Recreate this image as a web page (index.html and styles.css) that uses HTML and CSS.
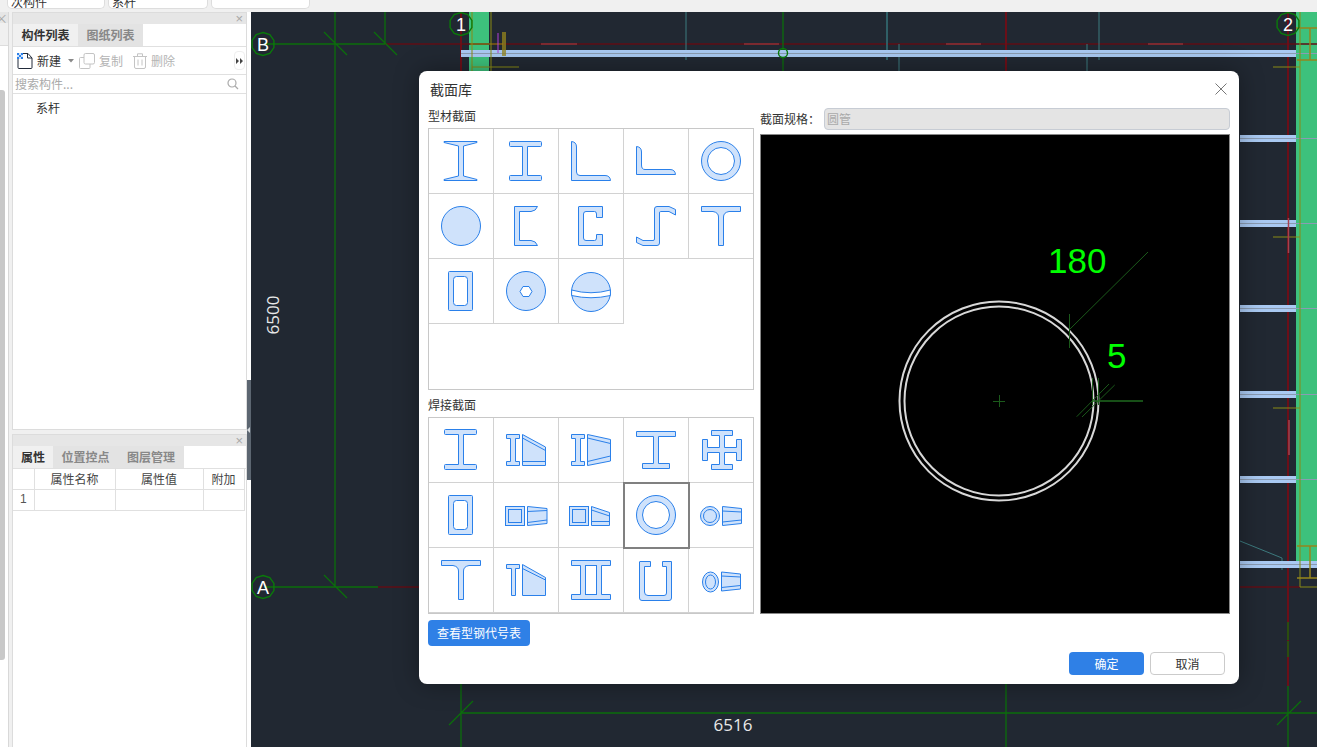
FILE: index.html
```html
<!DOCTYPE html>
<html lang="zh">
<head>
<meta charset="utf-8">
<title>截面库</title>
<link rel="stylesheet" href="styles.css">
</head>
<body>
<div class="topbar">
  <div class="top-field f1">次构件</div>
  <div class="top-field f2">系杆</div>
  <div class="top-field f3"></div>
</div>
<div class="main">
  <div class="strip">
    <div class="strip-head">×</div>
    <div class="strip-tabs"></div>
    <div class="strip-body"><div class="strip-scroll"></div></div>
  </div>
  <div class="panels">
    <section class="panel panel-list">
      <div class="panel-head"><span class="panel-x">×</span></div>
      <div class="tabs">
        <div class="tab active w65">构件列表</div>
        <div class="tab w65">图纸列表</div>
      </div>
      <div class="toolbar">
        <svg class="tool-icon" width="16" height="16" viewBox="0 0 16 16"><path class="doc" d="M1 4V14.500Q1 15.500 2 15.500H14Q15 15.500 15 14.500V5L11 .5H6"/><path class="doc" d="M10.500 .5V5H15"/><rect class="chk" x="0" y="0" width="6" height="6"/><path class="chk2" d="M0 0h2v2H0zM4 0h2v2H4zM2 2h2v2H2zM0 4h2v2H0zM4 4h2v2H4z"/></svg>
        <span class="tool-text">新建</span>
        <svg class="caret" width="6" height="4" viewBox="0 0 6 4"><path d="M0 0H6L3 3.500Z"/></svg>
        <svg class="tool-icon off" width="16" height="16" viewBox="0 0 16 16"><rect class="dis" x="5" y=".5" width="10.500" height="10.500" rx="1.500"/><path class="dis" d="M5 4.500H1.500Q.5 4.500 .5 5.500V14.500Q.5 15.500 1.500 15.500H10Q11 15.500 11 14.500V11"/></svg>
        <span class="tool-text muted">复制</span>
        <svg class="tool-icon off2" width="14" height="16" viewBox="0 0 14 16"><path class="dis" d="M0 3.500H14M4.500 3.500V.8H9.500V3.500M1.500 3.500V14Q1.500 15.500 3 15.500H11Q12.500 15.500 12.500 14V3.500M5 6.500V12.500M9 6.500V12.500"/></svg>
        <span class="tool-text muted">删除</span>
        <div class="more"><svg width="7" height="6" viewBox="0 0 7 6"><path d="M0 0L3 3L0 6ZM4 0L7 3L4 6Z"/></svg></div>
      </div>
      <div class="search">
        <span>搜索构件...</span>
        <svg width="12" height="12" viewBox="0 0 12 12"><circle class="mag" cx="5" cy="5" r="4"/><path class="mag" d="M8 8L11 11"/></svg>
      </div>
      <div class="list-item">系杆</div>
    </section>
    <section class="panel panel-props">
      <div class="panel-head"><span class="panel-x">×</span></div>
      <div class="tabs tabs-props">
        <div class="tab active w40">属性</div>
        <div class="tab w65">位置控点</div>
        <div class="tab w66">图层管理</div>
      </div>
      <table class="props">
        <colgroup><col class="c0"><col class="c1"><col class="c2"><col class="c3"></colgroup>
        <tr><th></th><th>属性名称</th><th>属性值</th><th>附加</th></tr>
        <tr><td class="num">1</td><td></td><td></td><td></td></tr>
      </table>
    </section>
  </div>
  <div class="splitter"><div class="handle"><svg width="3" height="6" viewBox="0 0 3 6"><path d="M3 0V6L0 3Z"/></svg></div></div>
  <div class="canvas">
    <svg class="cad" viewBox="251 12 1066 735" width="1066" height="735">
      <defs>
        <polygon id="bub" class="bubble" points="0,-11.500 6.800,-9.300 10.900,-3.600 10.900,3.600 6.800,9.300 0,11.500 -6.800,9.300 -10.900,3.600 -10.900,-3.600 -6.800,-9.300"/>
      </defs>
      <rect x="469" y="12" width="20" height="60" class="col"/>
      <rect x="1296" y="12" width="21" height="550" class="col"/>
      <path class="red" d="M385 44H1317M378 587H420M1240 587H1300"/>
      <path class="red-v" d="M461 12V71M1006 12V71M1288 12V686"/>
      <path class="green" d="M264 44H385M335 12V587M385 12V44M783 12V71M324 32L347 55M374 32L397 55M264 587H378M324 575L347 598M461 684V747M461 713H1317M449 725L473 701M1006 684V747M1288 686V747M1288 622V640M1288 641V657M1277 725L1301 701"/>
      <path class="dash" d="M541 44H577M744 44H779M946 44H981M1148 44H1183"/>
      <path class="teal" d="M686 12V60M899 44V71M1087 44V71M1099 12V60M1240 541L1282 558V570"/>
      <path class="teal-b" d="M887 12V60"/>
      <g class="beam-a">
        <rect x="461" y="50" width="835" height="7"/>
        <rect x="1240" y="135" width="56" height="7"/>
        <rect x="1240" y="220" width="56" height="7"/>
        <rect x="1240" y="305" width="56" height="7"/>
        <rect x="1240" y="391" width="56" height="7"/>
        <rect x="1240" y="476" width="56" height="7"/>
        <rect x="1240" y="561" width="77" height="7"/>
      </g>
      <path class="beam-b" d="M461 53.500H1317M1240 138.500H1317M1240 223.500H1317M1240 308.500H1317M1240 394.500H1317M1240 479.500H1317M1240 564.500H1317"/>
      <path class="olive" d="M472 12V71M491 12V71M470 44H503M472 67H519M1300 12V587H1317M1273 67H1300M1273 237H1300M1273 408H1300"/>
      <path class="olive-b" d="M503 32V56M505 32V56M1296 28H1317M1297 60H1317M1310 28V60M1297 546H1317M1297 578H1317M1310 546V578"/>
      <path class="purple" d="M498 33V53"/>
      <path class="pink" d="M1288.500 218V253M1289 420V455"/>
      <circle class="bubble" cx="783" cy="53" r="4.500"/>
      <use href="#bub" x="263" y="44"/>
      <use href="#bub" x="263" y="587"/>
      <use href="#bub" x="461" y="24"/>
      <use href="#bub" x="1288" y="24"/>
      <text class="label" x="263" y="50.500">B</text>
      <text class="label" x="263" y="593.500">A</text>
      <text class="label" x="461" y="30.500">1</text>
      <text class="label" x="1288" y="30.500">2</text>
      <text class="dim" x="733" y="731">6516</text>
      <text class="dim" transform="translate(279 315) rotate(-90)">6500</text>
    </svg>
  </div>
</div>

<div class="dialog">
  <div class="dialog-head">
    <span class="dialog-title">截面库</span>
    <svg class="dialog-x" width="12" height="12" viewBox="0 0 12 12"><path d="M.5 .5L11.500 11.500M11.500 .5L.5 11.500"/></svg>
  </div>
  <div class="dialog-body">
    <div class="col-left">
      <div class="group-label first">型材截面</div>
      <div class="sec-grid tall">
        <div class="cell"><svg class="sec" viewBox="0 0 40 40"><path d="M3 .5H36V1.500L22.500 5V35L36 38.500V39.500H3V38.500L17.500 35V5L3 1.500Z"/></svg></div>
        <div class="cell"><svg class="sec" viewBox="0 0 40 40"><path d="M4.500 .5H34.500Q35.500 .5 35.500 1.500V4.500Q35.500 5.500 34.500 5.500H21.500V34.500H34.500Q35.500 34.500 35.500 35.500V38.500Q35.500 39.500 34.500 39.500H4.500Q3.500 39.500 3.500 38.500V35.500Q3.500 34.500 4.500 34.500H16.500V5.500H4.500Q3.500 5.500 3.500 4.500V1.500Q3.500 .5 4.500 .5Z"/></svg></div>
        <div class="cell"><svg class="sec" viewBox="0 0 40 40"><path d="M.5 .5Q5.500 1 5.500 6V31Q5.500 34.500 9 34.500H34Q39 34.500 39.500 39.500H.5Z"/></svg></div>
        <div class="cell"><svg class="sec" viewBox="0 0 40 40"><path d="M.5 5.500Q5.500 6 5.500 11V24Q5.500 28.500 9 28.500H34Q39 28.500 39.500 33.500H.5Z"/></svg></div>
        <div class="cell"><svg class="sec" viewBox="0 0 40 40"><circle cx="20" cy="20" r="19.500"/><circle class="hole" cx="20" cy="20" r="13.500"/></svg></div>

        <div class="cell"><svg class="sec" viewBox="0 0 40 40"><circle cx="20" cy="20" r="19.500"/></svg></div>
        <div class="cell"><svg class="sec" viewBox="0 0 40 40"><path d="M8.500 .5H31.500Q30 5 25 5.500H13.500V34.500H25Q30 35 31.500 39.500H8.500Z"/></svg></div>
        <div class="cell"><svg class="sec" viewBox="0 0 40 40"><path d="M8 .5H31.500V11.500H25.500V8Q25.500 5.500 23.500 5.500H15Q12.500 5.500 12.500 8V32Q12.500 34.500 15 34.500H23.500Q25.500 34.500 25.500 32V28.500H31.500V39.500H8Q7.500 39.500 7.500 39V1Q7.500 .5 8 .5Z"/></svg></div>
        <div class="cell"><svg class="sec" viewBox="0 0 40 40"><path d="M18.500 3Q18.500 .5 21 .5H33L39.500 3.500V9L33 5.500H24.500Q23.500 5.500 23.500 7V37Q23.500 39.500 21 39.500H7L.5 36.500V31L7 34.500H17Q18.500 34.500 18.500 33Z"/></svg></div>
        <div class="cell"><svg class="sec" viewBox="0 0 40 40"><path d="M.5 .5H39.500V5.500H28Q22.500 6.500 22.500 11V39.500H17.500V11Q17.500 6.500 12 5.500H.5Z"/></svg></div>

        <div class="cell"><svg class="sec" viewBox="0 0 40 40"><rect x="7.500" y=".5" width="24" height="39" rx="1"/><rect class="hole" x="12.500" y="5.500" width="14" height="29" rx="3"/></svg></div>
        <div class="cell"><svg class="sec" viewBox="0 0 40 40"><circle cx="20" cy="20" r="19.500"/><path class="hole" d="M14 20.500L17 15.500H23L26 20.500L23 25.500H17Z"/></svg></div>
        <div class="cell"><svg class="sec" viewBox="0 0 40 40"><circle cx="20" cy="21" r="19.500"/><path class="hole" d="M.6 19Q20 24.500 39.400 19V24.500Q20 29 .6 24.500Z"/></svg></div>
      </div>
      <div class="group-label">焊接截面</div>
      <div class="sec-grid">
        <div class="cell"><svg class="sec" viewBox="0 0 40 40"><path d="M4.500 -.5H34.500Q35.500 -.5 35.500 .5V3.500Q35.500 4.500 34.500 4.500H22.500V34.500H34.500Q35.500 34.500 35.500 35.500V38.500Q35.500 39.500 34.500 39.500H4.500Q3.500 39.500 3.500 38.500V35.500Q3.500 34.500 4.500 34.500H17.500V4.500H4.500Q3.500 4.500 3.500 3.500V.5Q3.500 -.5 4.500 -.5Z"/></svg></div>
        <div class="cell"><svg class="sec" viewBox="0 0 40 40"><path d="M.5 4.500H13.500V8.500H9.500V31.500H13.500V35.500H.5V31.500H4.500V8.500H.5Z"/><path d="M16.500 4.500L39.500 17V35.500H16.500Z"/><path d="M16.500 8L39.500 20.500M16.500 31.500H39.500"/></svg></div>
        <div class="cell"><svg class="sec" viewBox="0 0 40 40"><path d="M.5 4.500H13.500V8.500H9.500V31.500H13.500V35.500H.5V31.500H4.500V8.500H.5Z"/><path d="M16.500 4.500L39.500 9.500V31L16.500 35.500Z"/><path class="hair" d="M16.500 8L39.500 13.500M16.500 31.500L39.500 26"/></svg></div>
        <div class="cell"><svg class="sec" viewBox="0 0 40 40"><path d="M.5 1.500H39.500V6.500H22.500V33.500H33.500V38.500H6.500V33.500H17.500V6.500H.5Z"/></svg></div>
        <div class="cell"><svg class="sec" viewBox="0 0 40 40"><path d="M10.500 .5H31.500V5.500H23.500V17.500H35.500V9.500H40.500V30.500H35.500V22.500H23.500V34.500H31.500V39.500H10.500V34.500H18.500V22.500H6.500V30.500H1.500V9.500H6.500V17.500H18.500V5.500H10.500Z"/></svg></div>

        <div class="cell"><svg class="sec" viewBox="0 0 40 40"><rect x="7.500" y=".5" width="24" height="39" rx="1"/><rect class="hole" x="12.500" y="5.500" width="14" height="29" rx="3"/></svg></div>
        <div class="cell"><svg class="sec" viewBox="0 0 40 40"><rect x="-.5" y="11.500" width="19" height="19"/><rect x="2.500" y="14.500" width="13" height="13"/><path d="M21.500 11.500L41 13.500V28.500L21.500 30.500Z"/><path class="hair" d="M21.500 16.500L41 15.500M21.500 27.500L41 25"/></svg></div>
        <div class="cell"><svg class="sec" viewBox="0 0 40 40"><rect x="-1.500" y="11.500" width="19" height="19"/><rect x="1.500" y="14.500" width="13" height="13"/><path d="M20.500 11.500L38.500 17.500V30.500H20.500Z"/><path class="hair" d="M20.500 15L38.500 21M20.500 26.500H38.500"/></svg></div>
        <div class="cell selected"><svg class="sec" viewBox="0 0 40 40"><circle cx="20" cy="20" r="19.500"/><circle class="hole" cx="20" cy="20" r="13.500"/></svg></div>
        <div class="cell"><svg class="sec" viewBox="0 0 40 40"><circle cx="9" cy="21" r="9.500"/><circle cx="9" cy="21" r="6.500"/><path d="M21.500 11.500L40.500 13.500V28.500L21.500 30.500Z"/><path class="hair" d="M21.500 16L40.500 17M21.500 27L40.500 25"/></svg></div>

        <div class="cell"><svg class="sec" viewBox="0 0 40 40"><path d="M.5 .5H39.500V5.500H28Q22.500 6.500 22.500 11V39.500H17.500V11Q17.500 6.500 12 5.500H.5Z"/></svg></div>
        <div class="cell"><svg class="sec" viewBox="0 0 40 40"><path d="M.5 4.500H13.500V8.500H9.500V35.500H5.500V8.500H.5Z"/><path d="M16.500 4.500L39.500 17.500V35.500H16.500Z"/><path d="M16.500 8.500L39.500 20"/></svg></div>
        <div class="cell"><svg class="sec" viewBox="0 0 40 40"><path d="M.5 .5H39.500V5.500H30.500V34.500H39.500V39.500H.5V34.500H9.500V5.500H.5Z"/><rect class="hole" x="14.500" y="5.500" width="11" height="29"/></svg></div>
        <div class="cell"><svg class="sec" viewBox="0 0 40 40"><path d="M4 1.500H14.500V6.500H8.500V32Q8.500 35.500 12 35.500H28Q30.500 35.500 30.500 33V6.500H26.500V1.500H35.500V38Q35.500 40.500 33 40.500H6Q3.500 40.500 3.500 38V2Q3.500 1.500 4 1.500Z"/></svg></div>
        <div class="cell"><svg class="sec" viewBox="0 0 40 40"><ellipse cx="9.500" cy="22" rx="8" ry="10"/><ellipse cx="9.500" cy="22" rx="5" ry="7"/><path d="M20.500 12L39.500 14V29L20.500 31Z"/><path class="hair" d="M20.500 16L39.500 17M20.500 27.500L39.500 25.500"/></svg></div>
      </div>
      <button class="btn primary catalog">查看型钢代号表</button>
    </div>
    <div class="col-right">
      <div class="spec-row">
        <span class="spec-label">截面规格：</span>
        <div class="spec-input">圆管</div>
      </div>
      <svg class="preview" viewBox="760 134 470 480" width="470" height="480">
        <circle class="tube" cx="999" cy="401" r="99.500"/>
        <circle class="tube" cx="999" cy="401" r="94.500"/>
        <path class="lead" d="M993 401.500H1005M999.500 395V407M1069.500 314V348M1069 330L1148 252M1092.500 378V405M1098.500 378V405M1076.700 416.700L1109 384M1082 417L1114.700 385"/>
        <path class="lead-b" d="M1092 401H1143"/>
        <text class="size" x="1048" y="273">180</text>
        <text class="size" x="1107" y="368">5</text>
      </svg>
    </div>
  </div>
  <div class="dialog-foot">
    <button class="btn primary wide">确定</button>
    <button class="btn plain wide">取消</button>
  </div>
</div>
</body>
</html>
```
FILE: styles.css
```css
* { box-sizing: border-box; }
html, body { margin: 0; padding: 0; height: 100%; overflow: hidden; }
body {
  width: 1317px; height: 747px; background: #f0f0f0; color: #333;
  font: 12px/1.2 "Noto Sans CJK SC", "Noto Sans", sans-serif;
  display: flex; flex-direction: column;
}
.topbar { height: 12px; flex: none; display: flex; padding-left: 7px; gap: 3px; }
.top-field {
  width: 98px; height: 9px; background: #fff; border: 1px solid #ddd; border-top: 0;
  border-radius: 0 0 5px 5px; overflow: hidden; padding-left: 3px; line-height: 4px; font-size: 12px; color: #333;
}
.f2 { width: 100px; }
.f3 { width: 99px; }
.main { flex: 1; display: flex; min-height: 0; }

.strip { width: 9px; flex: none; display: flex; flex-direction: column; background: #fff; border-right: 1px solid #d8d8d8; margin-right: 3px; }
.strip-head { height: 11px; background: #e6e6e6; color: #aaa; font-size: 13px; line-height: 11px; overflow: hidden; text-indent: -5px; }
.strip-tabs { height: 23px; background: #f0f0f0; border-bottom: 1px solid #ddd; }
.strip-body { flex: 1; padding-top: 44px; padding-bottom: 87px; display: flex; }
.strip-scroll { width: 5px; background: #c8c8c8; border-radius: 0 3px 3px 0; }

.panels { width: 235px; flex: none; display: flex; flex-direction: column; gap: 4px; }
.panel { background: #fff; border: 1px solid #dcdcdc; display: flex; flex-direction: column; }
.panel-list { height: 418px; }
.panel-props { flex: 1; border-bottom: 0; }
.panel-head { height: 11px; background: #e6e6e6; flex: none; display: flex; justify-content: flex-end; }
.panel-x { color: #a8a8a8; font: 13px/11px "Liberation Sans", sans-serif; margin-right: 3px; }
.tabs { height: 23px; flex: none; display: flex; background: #fff; border-bottom: 1px solid #e0e0e0; }
.tabs-props { margin-top: 0; }
.tab { background: #e3e3e3; color: #888; font-weight: 700; text-align: center; line-height: 22px; }
.tab.active { background: #f0f0f0; color: #333; }
.w65 { width: 65px; }
.w66 { width: 66px; }
.w40 { width: 40px; }
.toolbar { height: 28px; flex: none; display: flex; align-items: center; padding-left: 4px; border-bottom: 1px solid #e0e0e0; }
.tool-text { margin-left: 4px; line-height: 16px; color: #333; }
.muted { color: #b4b4b4; }
.tool-icon { flex: none; }
.caret { margin-left: 7px; fill: #888; flex: none; }
.off { margin-left: 5px; }
.off2 { margin-left: 10px; }
.doc { fill: none; stroke: #222b3a; stroke-width: 1; }
.chk { fill: #cfe2fb; }
.chk2 { fill: #2a80ea; }
.dis { fill: none; stroke: #c4c4c4; stroke-width: 1; }
.more { width: 11px; height: 19px; margin-left: auto; margin-right: 1px; border: 1px solid #eee; border-radius: 4px; display: flex; align-items: center; justify-content: center; fill: #444; }
.search { height: 19px; flex: none; display: flex; align-items: center; justify-content: space-between; padding: 0 7px 0 2px; color: #aaa; border-bottom: 1px solid #e0e0e0; }
.mag { fill: none; stroke: #aaa; stroke-width: 1.2; }
.list-item { padding: 5px 0 0 23px; color: #333; line-height: 18px; }

.props { border-collapse: collapse; table-layout: fixed; width: 231px; }
.c0 { width: 21px; }
.c1 { width: 81px; }
.c2 { width: 88px; }
.c3 { width: 41px; }
.props th, .props td { height: 21px; padding: 0; border: 1px solid #e0e0e0; border-top: 0; font-weight: 400; text-align: center; color: #444; }
.props th { height: 20px; }
.props th:first-child, .props td:first-child { border-left: 0; }
.props .num { color: #555; font-family: "Liberation Sans", sans-serif; }

.splitter { width: 4px; flex: none; background: #fff; display: flex; align-items: center; padding-top: 101px; }
.handle { width: 4px; height: 100px; background: #5c6671; display: flex; align-items: center; fill: #d8dce0; }

.canvas { width: 1066px; flex: none; background: #212832; overflow: hidden; }
.cad { display: block; }
.col { fill: #3dc17c; }
.green { fill: none; stroke: #0b6e0b; stroke-width: 1.3; }
.bubble { fill: none; stroke: #0a7a0a; stroke-width: 1.4; }
.red { fill: none; stroke: #5f0e16; stroke-width: 1.5; }
.red-v { fill: none; stroke: #6a0f18; stroke-width: 2; }
.dash { fill: none; stroke: #7c2a30; stroke-width: 2; }
.teal { fill: none; stroke: #3d7a7e; stroke-width: 1; }
.teal-b { fill: none; stroke: #2f5f66; stroke-width: 2; }
.beam-a { fill: #a9c9f2; }
.beam-b { fill: none; stroke: #8a9bb2; stroke-width: 1; }
.olive { fill: none; stroke: #8a8a14; stroke-width: 1; }
.olive-b { fill: none; stroke: #95851c; stroke-width: 1.5; }
.purple { fill: none; stroke: #b23fd8; stroke-width: 1; }
.pink { fill: none; stroke: #a8404e; stroke-width: 1.5; }
.label { fill: #fff; font: 18px "Liberation Sans", sans-serif; text-anchor: middle; }
.dim { fill: #e8e8e8; font: 17px "Open Sans", sans-serif; text-anchor: middle; }

.dialog {
  position: absolute; left: 419px; top: 71px; width: 820px; height: 613px;
  background: #fff; border-radius: 8px; box-shadow: 0 0 24px rgba(0, 0, 0, .35);
  display: flex; flex-direction: column; padding: 0 9px;
}
.dialog-head { height: 36px; flex: none; display: flex; align-items: center; justify-content: space-between; padding: 0 3px 0 2px; }
.dialog-title { font-size: 14px; color: #333; }
.dialog-x { fill: none; stroke: #777; stroke-width: 1; }
.dialog-body { display: flex; gap: 6px; align-items: flex-start; }
.col-left { width: 326px; flex: none; }
.group-label { height: 27px; line-height: 16px; padding-top: 7px; color: #333; }
.group-label.first { height: 21px; padding-top: 1px; }
.sec-grid {
  display: grid; grid-template-columns: repeat(4, 65px) 64px; grid-auto-rows: 65px; align-content: start;
  border: 1px solid #c8c8c8; width: 326px; height: 197px;
}
.sec-grid.tall { height: 262px; }
.cell { border-right: 1px solid #d2d2d2; border-bottom: 1px solid #d2d2d2; display: flex; align-items: center; justify-content: center; }
.cell:nth-child(5n) { border-right: 0; }
.cell.selected { outline: 2px solid #808080; outline-offset: -1px; position: relative; }
.sec { width: 40px; height: 40px; overflow: visible; flex: none; fill: #cfe2fb; stroke: #2a80ea; stroke-width: 1; }
.sec .hole { fill: #fff; }
.sec .hair { fill: none; }
.btn { font: 12px/1 "Noto Sans CJK SC", sans-serif; border-radius: 4px; padding: 0; cursor: pointer; }
.primary { background: #2f80e6; color: #fff; border: 0; }
.plain { background: #fff; color: #333; border: 1px solid #cbcbcb; }
.catalog { width: 102px; height: 26px; margin-top: 6px; display: block; }
.col-right { width: 470px; flex: none; padding-top: 1px; }
.spec-row { display: flex; align-items: center; height: 22px; margin-bottom: 4px; }
.spec-label { width: 64px; flex: none; color: #333; }
.spec-input { flex: 1; height: 22px; background: #e4e4e4; border: 1px solid #c7ccd4; border-radius: 4px; color: #aaa; line-height: 20px; padding-left: 2px; }
.preview { display: block; background: #000; outline: 1px solid #888; outline-offset: -1px; }
.tube { fill: none; stroke: #d8d8d8; stroke-width: 2; }
.lead { fill: none; stroke: #1b5a1b; stroke-width: 1; }
.lead-b { fill: none; stroke: #1f6a1f; stroke-width: 1.5; }
.size { fill: #00ff00; font: 35px "Liberation Sans", sans-serif; }
.dialog-foot { display: flex; justify-content: flex-end; gap: 6px; padding: 6px 5px 0 0; }
.wide { width: 75px; height: 23px; }
```
